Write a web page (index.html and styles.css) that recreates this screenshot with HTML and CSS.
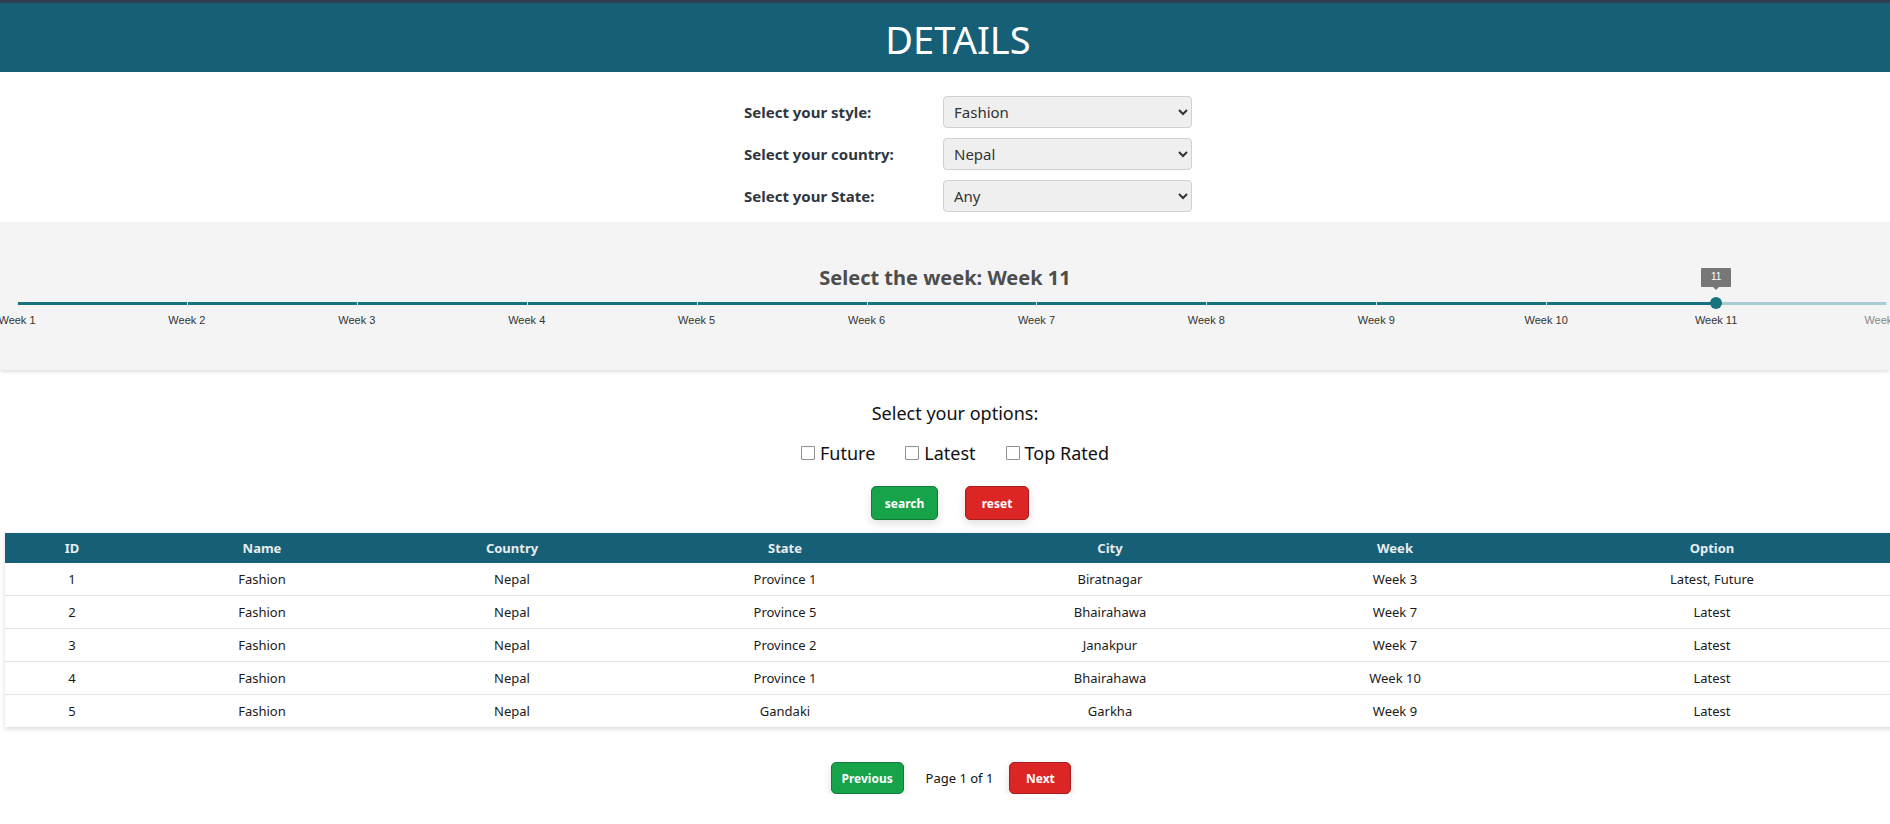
FILE: index.html
```html
<!DOCTYPE html>
<html>
<head>
<meta charset="utf-8">
<link rel="stylesheet" href="styles.css">
</head>
<body>
<div class="page">
  <div class="topbar"></div>
  <header class="header"><h1>DETAILS</h1></header>

  <div class="form">
    <label class="lbl">Select your style:</label>
    <select class="sel"><option>Fashion</option></select>
    <label class="lbl">Select your country:</label>
    <select class="sel"><option>Nepal</option></select>
    <label class="lbl">Select your State:</label>
    <select class="sel"><option>Any</option></select>
  </div>

  <section class="weeks">
    <h2 class="weeks-title">Select the week: Week 11</h2>
    <div class="slider">
      <div class="track"></div>
      <div class="track-fill" style="width:90.909%"></div>
      <span class="tick" style="left:0%"></span>
      <span class="tick" style="left:9.0909%"></span>
      <span class="tick" style="left:18.1818%"></span>
      <span class="tick" style="left:27.2727%"></span>
      <span class="tick" style="left:36.3636%"></span>
      <span class="tick" style="left:45.4545%"></span>
      <span class="tick" style="left:54.5454%"></span>
      <span class="tick" style="left:63.6363%"></span>
      <span class="tick" style="left:72.7272%"></span>
      <span class="tick" style="left:81.8181%"></span>
      <span class="tick" style="left:100%"></span>
      <span class="wk" style="left:0%">Week 1</span>
      <span class="wk" style="left:9.0909%">Week 2</span>
      <span class="wk" style="left:18.1818%">Week 3</span>
      <span class="wk" style="left:27.2727%">Week 4</span>
      <span class="wk" style="left:36.3636%">Week 5</span>
      <span class="wk" style="left:45.4545%">Week 6</span>
      <span class="wk" style="left:54.5454%">Week 7</span>
      <span class="wk" style="left:63.6363%">Week 8</span>
      <span class="wk" style="left:72.7272%">Week 9</span>
      <span class="wk" style="left:81.8181%">Week 10</span>
      <span class="wk" style="left:90.909%">Week 11</span>
      <span class="wk wk-off" style="left:100%">Week 12</span>
      <span class="handle" style="left:90.909%"></span>
      <span class="tip" style="left:90.909%">11</span>
    </div>
  </section>

  <div class="options">
    <p class="opt-title">Select your options:</p>
    <div class="checks">
      <label class="chk"><span class="box"></span>Future</label>
      <label class="chk"><span class="box"></span>Latest</label>
      <label class="chk"><span class="box"></span>Top Rated</label>
    </div>
    <div class="actions">
      <button class="btn green b-search">search</button>
      <button class="btn red b-reset">reset</button>
    </div>
  </div>

  <div class="table-wrap">
    <table class="grid">
      <colgroup>
        <col style="width:134px"><col style="width:246px"><col style="width:254px"><col style="width:292px"><col style="width:358px"><col style="width:212px"><col style="width:422px">
      </colgroup>
      <thead>
        <tr><th>ID</th><th>Name</th><th>Country</th><th>State</th><th>City</th><th>Week</th><th>Option</th></tr>
      </thead>
      <tbody>
        <tr><td>1</td><td>Fashion</td><td>Nepal</td><td>Province 1</td><td>Biratnagar</td><td>Week 3</td><td>Latest, Future</td></tr>
        <tr><td>2</td><td>Fashion</td><td>Nepal</td><td>Province 5</td><td>Bhairahawa</td><td>Week 7</td><td>Latest</td></tr>
        <tr><td>3</td><td>Fashion</td><td>Nepal</td><td>Province 2</td><td>Janakpur</td><td>Week 7</td><td>Latest</td></tr>
        <tr><td>4</td><td>Fashion</td><td>Nepal</td><td>Province 1</td><td>Bhairahawa</td><td>Week 10</td><td>Latest</td></tr>
        <tr><td>5</td><td>Fashion</td><td>Nepal</td><td>Gandaki</td><td>Garkha</td><td>Week 9</td><td>Latest</td></tr>
      </tbody>
    </table>
  </div>

  <div class="pager">
    <button class="btn green p-prev">Previous</button>
    <span class="pinfo">Page 1 of 1</span>
    <button class="btn red p-next">Next</button>
  </div>
</div>
</body>
</html>
```
FILE: styles.css
```css
html, body {
  margin: 0;
  padding: 0;
  background: #ffffff;
}
body {
  font-family: "Noto Sans", "Open Sans", sans-serif;
  color: #222;
}
.page {
  width: 1890px;
  overflow: hidden;
}
.topbar {
  height: 3px;
  background: #2c3e50;
}
.header {
  background: #175f76;
  height: 69px;
  display: flex;
  align-items: center;
  justify-content: center;
  padding-left: 26px;
}
.header h1 {
  margin: 0;
  font-size: 38px;
  line-height: 52px;
  padding-top: 2px;
  font-weight: 400;
  color: #ffffff;
}

/* form */
.form {
  display: grid;
  grid-template-columns: 199px 249px;
  row-gap: 10px;
  width: 448px;
  margin: 24px 0 0 calc(50% - 201px);
  align-items: center;
}
.lbl {
  font-size: 15px;
  font-weight: 700;
  color: #2f3640;
}
.sel {
  height: 32px;
  width: 249px;
  border: 1px solid #cfcfd4;
  border-radius: 4px;
  background-color: #efefef;
  font-family: "Noto Sans", sans-serif;
  font-size: 15px;
  color: #333;
  padding: 0 6px;
}

/* weeks */
.weeks {
  margin-top: 10px;
  background: #f4f4f4;
  height: 148px;
  box-shadow: 0 2px 4px rgba(0,0,0,0.12);
  padding-top: 42px;
  box-sizing: border-box;
}
.weeks-title {
  margin: 0;
  text-align: center;
  font-size: 20px;
  line-height: 28px;
  font-weight: 700;
  color: #4d4d4d;
}
.slider {
  position: relative;
  margin: -2px 4px 0 17px;
  height: 50px;
}
.track {
  position: absolute;
  left: 0;
  right: 0;
  top: 12px;
  height: 3px;
  background: #a7cdd2;
}
.track-fill {
  position: absolute;
  left: 0;
  top: 12px;
  height: 3px;
  background: #17737e;
}
.tick {
  position: absolute;
  top: 12px;
  width: 1px;
  height: 3px;
  background: #cfe3e6;
}
.wk {
  position: absolute;
  top: 24px;
  transform: translateX(-50%);
  font-family: "Liberation Sans", Arial, sans-serif;
  font-size: 11px;
  color: #333;
  white-space: nowrap;
}
.wk-off {
  color: #888;
}
.handle {
  position: absolute;
  top: 7px;
  width: 12px;
  height: 12px;
  margin-left: -6px;
  border-radius: 50%;
  background: #17737e;
}
.tip {
  position: absolute;
  top: -22px;
  transform: translateX(-50%);
  background: #777777;
  color: #ffffff;
  font-family: "Liberation Sans", Arial, sans-serif;
  font-size: 10px;
  width: 30px;
  height: 19px;
  line-height: 17px;
  text-align: center;
  border-radius: 1px;
}
.tip::after {
  content: "";
  position: absolute;
  left: 50%;
  bottom: -3px;
  margin-left: -3px;
  border-left: 3px solid transparent;
  border-right: 3px solid transparent;
  border-top: 3px solid #777777;
}

/* options */
.options {
  display: flex;
  flex-direction: column;
  align-items: center;
  padding-top: 31px;
  padding-left: 20px;
}
.opt-title {
  margin: 0;
  font-size: 18px;
  line-height: 24px;
  color: #111;
}
.checks {
  display: flex;
  gap: 30px;
  margin-top: 16px;
  font-size: 18px;
  line-height: 24px;
  color: #111;
}
.chk {
  display: flex;
  align-items: center;
  gap: 5px;
}
.box {
  width: 12px;
  height: 12px;
  border: 1px solid #8f8f8f;
  border-radius: 1px;
  background: #fff;
}
.actions {
  display: flex;
  gap: 27px;
  margin-top: 21px;
  margin-left: -10px;
}
.btn {
  font-family: "Noto Sans", sans-serif;
  font-weight: 700;
  font-size: 12px;
  color: #ffffff;
  border-radius: 5px;
  height: 34px;
  padding: 0;
  cursor: pointer;
  box-shadow: 0 4px 8px rgba(0,0,0,0.12);
}
.b-search { width: 67px; }
.b-reset { width: 64px; }
.green {
  background: #17a34a;
  border: 1px solid #147a39;
}
.red {
  background: #dc2626;
  border: 1px solid #a61d1d;
}

/* table */
.table-wrap {
  margin: 13px 0 0 5px;
}
.grid {
  border-collapse: collapse;
  table-layout: fixed;
  width: 1918px;
  font-size: 13px;
  box-shadow: 0 2px 5px rgba(0,0,0,0.15);
}
.grid th {
  background: #175f76;
  color: #e8eef0;
  font-weight: 700;
  height: 30px;
  padding: 0;
  text-align: center;
}
.grid td {
  height: 32px;
  padding: 0;
  text-align: center;
  color: #1a1a1a;
  border-bottom: 1px solid #e2e2e2;
}
.grid tbody tr:last-child td {
  border-bottom: none;
}

/* pager */
.pager {
  display: flex;
  justify-content: center;
  align-items: center;
  margin-top: 35px;
  margin-left: 12px;
}
.p-prev {
  height: 32px;
  width: 73px;
  margin-right: 22px;
}
.p-next {
  height: 32px;
  width: 62px;
  margin-left: 16px;
}
.pinfo {
  font-size: 13px;
  color: #111;
}
```
